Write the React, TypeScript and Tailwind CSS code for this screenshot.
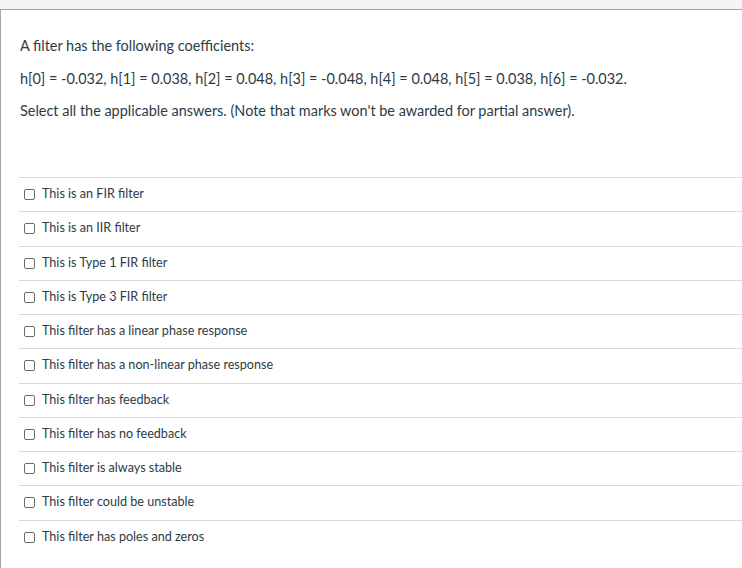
import React from 'react';

const options = [
  'This is an FIR filter',
  'This is an IIR filter',
  'This is Type 1 FIR filter',
  'This is Type 3 FIR filter',
  'This filter has a linear phase response',
  'This filter has a non-linear phase response',
  'This filter has feedback',
  'This filter has no feedback',
  'This filter is always stable',
  'This filter could be unstable',
  'This filter has poles and zeros',
];

export default function App() {
  return (
    <div
      className="h-[568px] w-[742px] overflow-hidden bg-white text-[#2d3b45]"
      style={{ fontFamily: 'Lato, "Liberation Sans", sans-serif' }}
    >
      {/* top bar */}
      <div className="h-[10px] border-b border-[#a5a5a5] bg-[#f5f5f5]" />

      <div className="h-[558px] border-l border-[#a5a5a5]">
        {/* question */}
        <div className="pl-[19px] pt-[26px] text-[14.45px] leading-[20px]">
          <p>A filter has the following coefficients:</p>
          <p className="mt-[13px]">
            h[0] = -0.032, h[1] = 0.038, h[2] = 0.048, h[3] = -0.048, h[4] = 0.048, h[5] = 0.038, h[6] = -0.032.
          </p>
          <p className="mt-[12px]">
            Select all the applicable answers. (Note that marks won't be awarded for partial answer).
          </p>
        </div>

        {/* answers */}
        <div className="ml-[18px] mt-[56px]">
          {options.map((o) => (
            <div
              key={o}
              className="flex h-[34.25px] items-center gap-[7px] border-t border-[#d9d9d9] pl-[5px] text-[12.6px]"
            >
              <span className="h-[11px] w-[11px] shrink-0 rounded-[2px] border border-[#6b6b6b] bg-white" />
              <span>{o}</span>
            </div>
          ))}
        </div>
      </div>
    </div>
  );
}
